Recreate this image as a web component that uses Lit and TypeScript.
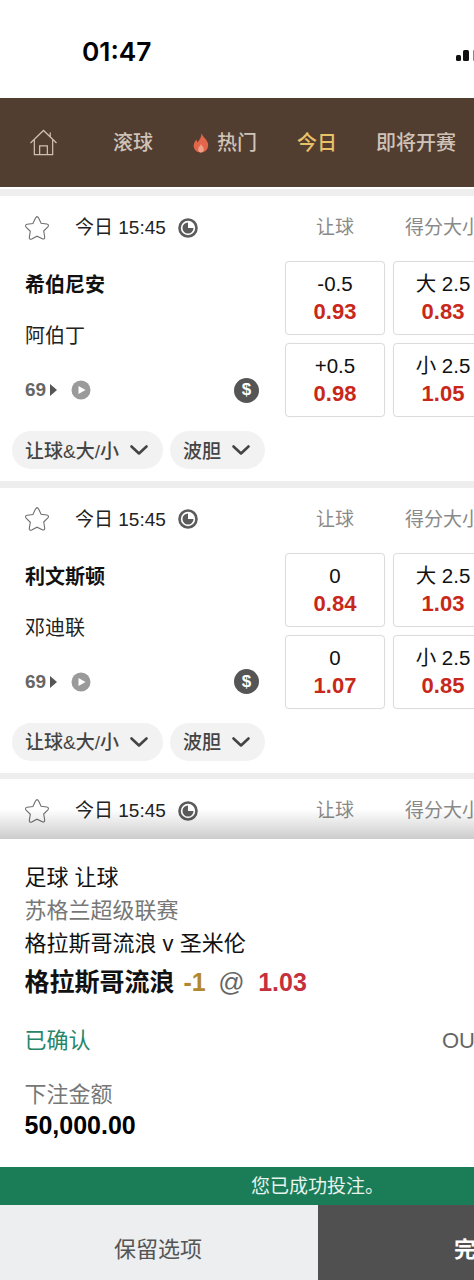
import { LitElement, html, css, svg } from "lit";
import { customElement } from "lit/decorators.js";

interface Odd { top: string; val: string; }
interface Match { home: string; away: string; hc: Odd[]; ou: Odd[]; }

const MATCHES: Match[] = [
  { home: "希伯尼安", away: "阿伯丁",
    hc: [{ top: "-0.5", val: "0.93" }, { top: "+0.5", val: "0.98" }],
    ou: [{ top: "大 2.5", val: "0.83" }, { top: "小 2.5", val: "1.05" }] },
  { home: "利文斯顿", away: "邓迪联",
    hc: [{ top: "0", val: "0.84" }, { top: "0", val: "1.07" }],
    ou: [{ top: "大 2.5", val: "1.03" }, { top: "小 2.5", val: "0.85" }] },
];

const star = svg`<svg class="star" viewBox="0 0 26 26" width="26" height="26"><path d="M13 1.600c.7 0 1.200.5 1.600 1.300l2.500 5.300 5.700.8c1.600.2 2.200 1.600 1.100 2.800l-4.200 4.200 1 6c.2 1.600-1 2.400-2.400 1.700L13 21.200l-5.300 2.800c-1.400.7-2.600-.1-2.400-1.700l1-6-4.200-4.200c-1.100-1.200-.5-2.600 1.100-2.800l5.700-.8 2.500-5.300c.4-.8.9-1.300 1.600-1.300z" fill="none" stroke="#6f6f6f" stroke-width="1.100"/></svg>`;
const clock = svg`<svg viewBox="0 0 20 20" width="20" height="20"><circle cx="10" cy="10" r="8.500" fill="none" stroke="#5c5c5c" stroke-width="2.600"/><path d="M10 4.500a5.500 5.500 0 1 0 5.500 5.500h-5.500z" fill="#5c5c5c"/></svg>`;
const play = svg`<svg viewBox="0 0 20 20" width="20" height="20"><circle cx="10" cy="10" r="9.500" fill="#9a9a9a"/><path d="M7.500 6l7 4-7 4z" fill="#fff"/></svg>`;
const chev = svg`<svg viewBox="0 0 20 12" width="20" height="12"><path d="M2.500 2.500L10 9.500l7.500-7" fill="none" stroke="#444" stroke-width="2.600" stroke-linecap="round" stroke-linejoin="round"/></svg>`;
const home = svg`<svg viewBox="0 0 30 28" width="29" height="27"><path d="M1.500 14.500L15 1.500l13.500 13M5.500 11.500V26.500H24.500V11.500M11 26.500V17.500H19V26.500M22 8V3.500" fill="none" stroke="#cdbfb2" stroke-width="1.300"/></svg>`;
const flame = svg`<svg viewBox="0 0 16 20" width="16" height="20"><path d="M8.500 0c.6 3.500 5.500 6 6.500 10.500C16 15.500 12.500 19.500 8 19.500S0 16 .8 11.500C1.200 9.500 2.500 8 3.200 6.500c.6 1 1 2 1.200 3C6.500 7 8.800 3.500 8.500 0z" fill="#e2664a"/><path d="M8 11c.4 1.500 2.800 2.800 2.800 5.200 0 2-1.300 3.300-2.800 3.300s-2.800-1.300-2.800-3.300C5.200 14 7.600 13 8 11z" fill="#f0a088"/></svg>`;

@customElement("app-root")
export class AppRoot extends LitElement {
  static styles = css`
    :host { display: block; width: 474px; height: 1280px; overflow: hidden; background: #fff;
      font-family: "Liberation Sans", "Noto Sans CJK SC", sans-serif; color: #111; }
    .page { display: flex; flex-direction: column; height: 1280px; }
    .status { height: 98px; flex: none; display: flex; justify-content: space-between; align-items: flex-start; box-sizing: border-box; padding: 35px 0 0 82px; overflow: hidden; }
    .clock { font: 600 26.300px/34px Inter, sans-serif; color: #000; }
    .signal { display: flex; align-items: flex-end; gap: 2px; height: 11px; margin-top: 15px; }
    .signal i { display: block; width: 5px; border-radius: 1.500px; background: #111; }
    .signal i:nth-child(1) { height: 6px; }
    .signal i:nth-child(2) { height: 11px; width: 6px; margin-right: 2px; }
    .signal i:nth-child(3) { height: 11px; width: 1px; border-radius: 1px 0 0 1px; background: #888; }
    .nav { height: 89px; flex: none; background: #523d31; display: flex; align-items: center; font-size: 20px; font-weight: 500; color: #cfc3b8; white-space: nowrap; box-sizing: border-box; padding-left: 29px; }
    .nav .h { display: flex; width: 84px; }
    .nav .t, .nav .today, .nav .soon, .nav .hot span { margin-bottom: 3px; }
    .hot { display: flex; align-items: center; gap: 8px; margin-left: 40px; }
    .today { color: #e9c267; margin-left: 40px; }
    .soon { margin-left: 39px; }
    .list { flex: 1; min-height: 0; overflow: hidden; background: #eeeeee; padding-top: 2px; border-top: 2px solid #fff; box-sizing: border-box; }
    .card { background: #fff; height: 285px; margin-bottom: 6.700px; box-sizing: border-box; padding: 0 0 0 12px; position: relative; display: flex; flex-direction: column; }
    .list > .card:first-child { margin-top: 5px; }
    .top { display: flex; align-items: center; height: 65px; flex: none; }
    .star { margin: -2px 0 0 12px; flex: none; }
    .time { margin: -6px 0 0 25px; font-size: 19px; color: #222; width: 94px; white-space: nowrap; }
    .tclock { display: flex; margin: -2px 0 0 9px; }
    .h1 { position: absolute; left: 316px; color: #8a8a8a; font-size: 19px; white-space: nowrap; margin-top: -6px; }
    .h2 { position: absolute; left: 405px; width: 69px; overflow: hidden; color: #8a8a8a; font-size: 19px; white-space: nowrap; margin-top: -6px; }
    .body { display: flex; flex: none; height: 157px; }
    .teams { width: 273px; flex: none; box-sizing: border-box; padding-left: 13px; display: flex; flex-direction: column; }
    .home { font-size: 20px; font-weight: 700; line-height: 28px; height: 51px; margin-top: 10px; }
    .away { font-size: 20px; line-height: 28px; height: 53px; color: #222; }
    .meta { display: flex; align-items: center; height: 26px; margin-top: 2px; color: #666; font-size: 19px; font-weight: 700; }
    .tri { width: 0; height: 0; border-left: 7px solid #555; border-top: 6px solid transparent; border-bottom: 6px solid transparent; margin-left: 4px; }
    .playi { display: flex; margin-left: 14px; }
    .dollar { margin-left: auto; width: 25px; height: 25px; margin-right: 26px; border-radius: 50%; background: #555; color: #fff; font-size: 17px; font-weight: 700; display: flex; align-items: center; justify-content: center; }
    .col { width: 100px; flex: none; display: flex; flex-direction: column; gap: 8px; margin-right: 8px; }
    .odd { height: 74px; box-sizing: border-box; border: 1px solid #dcdcdc; border-radius: 4px; text-align: center; padding-top: 9px; font-size: 20.500px; line-height: 25px; color: #111; box-shadow: 0 0 1px #e4e4e4; white-space: nowrap; }
    .odd b { display: block; color: #c8281a; font-size: 22px; line-height: 27px; margin-top: 2px; }
    .tabs { display: flex; gap: 7px; margin-top: 13px; }
    .pill { background: #f2f2f2; height: 38px; border-radius: 19px; display: flex; align-items: center; gap: 10px; padding: 0 14px 0 13px; font-size: 19px; font-weight: 500; color: #444; white-space: nowrap; box-sizing: border-box; }
    .pill span { margin-bottom: 2px; }
    .sheet { flex: none; background: #fff; position: relative; height: 441px; display: flex; flex-direction: column; }
    .sheet::before { content: ""; position: absolute; left: 0; right: 0; top: -30px; height: 30px; background: linear-gradient(rgba(0,0,0,0), rgba(0,0,0,.2)); }
    .info { padding: 22px 25px 0 24.500px; flex: none; height: 328px; box-sizing: border-box; white-space: nowrap; }
    .l { font-size: 22px; line-height: 33px; color: #111; }
    .league { color: #777; }
    .pick { font-size: 25px; line-height: 36px; font-weight: 700; display: flex; align-items: baseline; margin-top: 4px; }
    .hcp { color: #b3882a; margin-left: 9px; }
    .at { color: #666; font-weight: 400; font-size: 26px; margin-left: 12.500px; }
    .pr { color: #c4303c; margin-left: 13.500px; }
    .status2 { display: flex; justify-content: space-between; margin-top: 25px; font-size: 22px; line-height: 32px; color: #27866a; margin-right: -25px; }
    .ref { color: #666; width: 32px; overflow: hidden; }
    .stake { margin-top: 22px; color: #777; font-size: 22px; line-height: 32px; }
    .amt { font-size: 25px; font-weight: 700; line-height: 32px; color: #000; margin-top: -2px; }
    .toast { height: 38px; flex: none; background: #1b7d58; color: #e8f3ee; font-size: 19px; line-height: 39px; box-sizing: border-box; white-space: nowrap; text-align: left; padding-left: 251px; }
    .btns { flex: 1; display: flex; font-size: 22px; }
    .keep { width: 318px; flex: none; box-sizing: border-box; background: #eceeef; color: #555; display: flex; align-items: center; justify-content: center; padding: 9px 2px 0 0; }
    .done { flex: 1; background: #505050; color: #fff; font-weight: 700; box-sizing: border-box; padding: 9px 0 0 136px; display: flex; align-items: center; overflow: hidden; white-space: nowrap; }
  `;

  private header() {
    return html`<div class="top">
      ${star}<span class="time">今日 15:45</span><span class="tclock">${clock}</span>
      <span class="h1">让球</span><span class="h2">得分大小</span>
    </div>`;
  }

  private odds(list: Odd[]) {
    return html`<div class="col">${list.map(o => html`<div class="odd">${o.top}<b>${o.val}</b></div>`)}</div>`;
  }

  render() {
    return html`<div class="page">
      <div class="status"><div class="clock">01:47</div><div class="signal"><i></i><i></i><i></i></div></div>
      <div class="nav">
        <span class="h">${home}</span><span class="t">滚球</span>
        <span class="hot">${flame}<span>热门</span></span>
        <span class="today">今日</span><span class="soon">即将开赛</span>
      </div>
      <div class="list">
        ${MATCHES.map(m => html`<div class="card">
          ${this.header()}
          <div class="body">
            <div class="teams">
              <div class="home">${m.home}</div>
              <div class="away">${m.away}</div>
              <div class="meta">69<span class="tri"></span><span class="playi">${play}</span><span class="dollar">$</span></div>
            </div>
            ${this.odds(m.hc)}${this.odds(m.ou)}
          </div>
          <div class="tabs">
            <div class="pill"><span>让球&amp;大/小</span>${chev}</div>
            <div class="pill"><span>波胆</span>${chev}</div>
          </div>
        </div>`)}
        <div class="card">${this.header()}</div>
      </div>
      <div class="sheet">
        <div class="info">
          <div class="l">足球 让球</div>
          <div class="l league">苏格兰超级联赛</div>
          <div class="l">格拉斯哥流浪 v 圣米伦</div>
          <div class="pick">格拉斯哥流浪<span class="hcp">-1</span><span class="at">@</span><span class="pr">1.03</span></div>
          <div class="status2"><span>已确认</span><span class="ref">OU</span></div>
          <div class="stake">下注金额</div>
          <div class="amt">50,000.00</div>
        </div>
        <div class="toast">您已成功投注。</div>
        <div class="btns"><div class="keep">保留选项</div><div class="done">完成</div></div>
      </div>
    </div>`;
  }
}
